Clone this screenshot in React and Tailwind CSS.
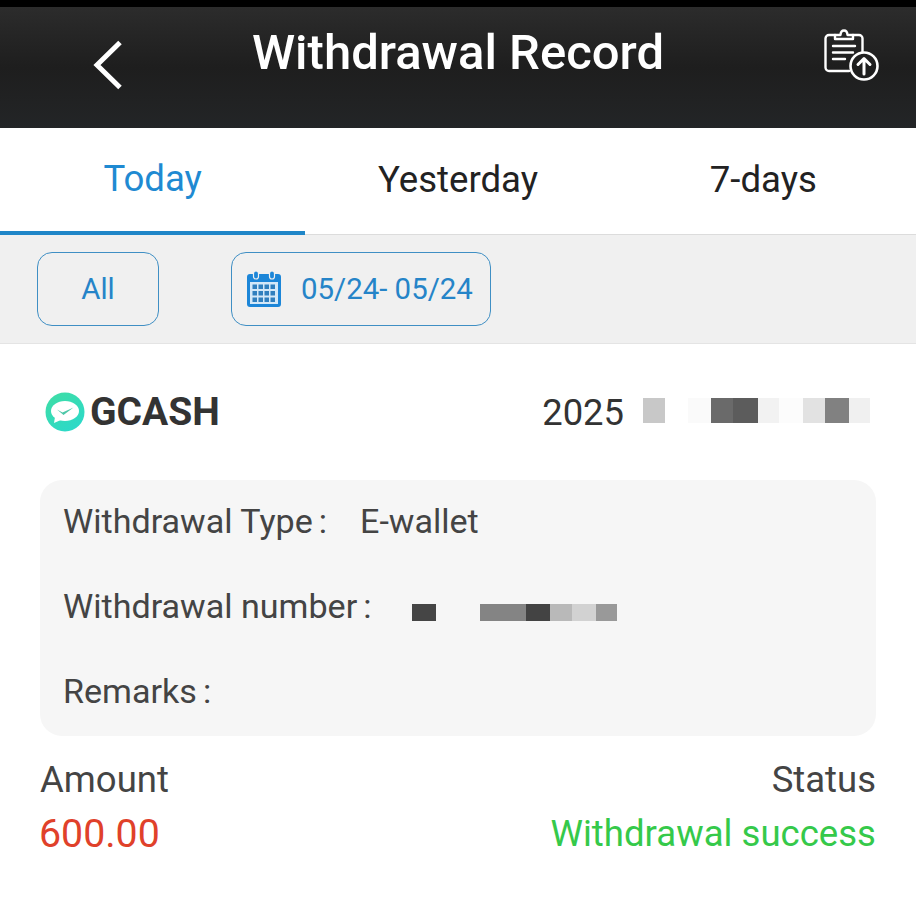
import React from "react";

const BackIcon = () => (
  <svg width="32" height="50" viewBox="0 0 32 50" fill="none" stroke="#fff" strokeWidth="5">
    <path d="M28 2.5 L5 25 L28 47.5" />
  </svg>
);

const ExportIcon = () => (
  <svg width="56" height="54" viewBox="0 0 56 54" fill="none" stroke="#fff" strokeWidth="2.4" strokeLinecap="round" strokeLinejoin="round">
    <path d="M12 7H6a3.5 3.5 0 0 0-3.5 3.5v29A3.5 3.5 0 0 0 6 43h20" />
    <path d="M30 7h6a3.5 3.5 0 0 1 3.5 3.5V24" />
    <path d="M12 11V7h5.5c.3-6 6.7-6 7 0H30v4z" />
    <path d="M10 18h22M10 24.5h20M10 31h12" />
    <circle cx="41" cy="38" r="13.5" strokeWidth="2.6" />
    <path d="M41 46V31M35 36.5l6-6 6 6" strokeWidth="3" />
  </svg>
);

const CalendarIcon = () => (
  <svg width="34" height="37" viewBox="0 0 34 37">
    <path d="M3 4h28a3 3 0 0 1 3 3v27a3 3 0 0 1-3 3H3a3 3 0 0 1-3-3V7a3 3 0 0 1 3-3z" fill="#1c86d8" />
    <rect x="3" y="12" width="28" height="22" fill="#d3e8f8" />
    <rect x="6.5" y="1" width="5" height="8" rx="2.5" fill="#1c86d8" stroke="#f0f0f0" strokeWidth="1.2" />
    <rect x="22.5" y="1" width="5" height="8" rx="2.5" fill="#1c86d8" stroke="#f0f0f0" strokeWidth="1.2" />
    <g fill="#2f7fbe">
      {[14.5, 21, 27.5].map((y) =>
        [5.5, 11.5, 17.5, 23.5].map((x) => <rect key={`${x}-${y}`} x={x} y={y} width="4.5" height="4.5" />)
      )}
    </g>
  </svg>
);

const GcashLogo = () => (
  <svg width="40" height="40" viewBox="0 0 40 40">
    <defs>
      <linearGradient id="gcashFill" x1="0.2" y1="0" x2="0.8" y2="1">
        <stop offset="0" stopColor="#3edda6" />
        <stop offset="1" stopColor="#2bd9cb" />
      </linearGradient>
    </defs>
    <circle cx="20" cy="20" r="19.5" fill="url(#gcashFill)" />
    <ellipse cx="20" cy="19" rx="14" ry="10" fill="#fff" />
    <path d="M10 25l-1 6 8-3.5z" fill="#fff" />
    <path d="M12 17.5l5.5 3 11-5-10 7.5z" fill="#4cc7a8" />
  </svg>
);

// Redacted values are shown as rows of mosaic blocks
const Mosaic = ({ blocks, height }) => (
  <div className="flex items-stretch" style={{ height }}>
    {blocks.map(([width, color], i) => (
      <div key={i} style={{ width, backgroundColor: color }} />
    ))}
  </div>
);

const dateBlocks = [
  [22, "#c8c8c8"], [23, "#ffffff"], [23, "#fafafa"], [22, "#6a6a6a"], [25, "#5c5c5c"], [21, "#f2f2f2"],
  [24, "#fcfcfc"], [22, "#e2e2e2"], [24, "#818181"], [21, "#f0f0f0"],
];

const numberBlocks = [
  [24, "#454545"], [44, "#f6f6f6"], [46, "#848484"], [24, "#434343"], [22, "#b9b9b9"], [24, "#d2d2d2"], [21, "#999999"],
];

const Field = ({ label, children }) => (
  <div className="flex items-center h-[42px] text-[34.1px] leading-none text-[#444]">
    <span>{label}</span>
    <span className="ml-[6px]">:</span>
    {children}
  </div>
);

export default function App() {
  return (
    <div className="w-[916px] h-[905px] bg-white overflow-hidden" style={{ fontFamily: "Roboto, 'Liberation Sans', sans-serif" }}>
      <div className="h-[7px] bg-black" />
      <header className="h-[121px] bg-gradient-to-b from-[#2c2c2c] via-[#1e1e1e] to-[#232527] grid grid-cols-[1fr_auto_1fr] items-start pl-[92px] pr-[37px]">
        <div className="mt-[33px]"><BackIcon /></div>
        <h1 className="mt-[17px] text-[49px] leading-[58px] font-medium text-white -ml-[55px]">Withdrawal Record</h1>
        <div className="mt-[21px] justify-self-end"><ExportIcon /></div>
      </header>

      <nav className="h-[107px] grid grid-cols-3 text-[36.6px] border-b border-[#dcdcdc]">
        <div className="h-[107px] flex items-center justify-center text-[#1f8ad2] border-b-[4px] border-[#1f86c8]">Today</div>
        <div className="flex items-center justify-center text-[#222] pb-[3px]">Yesterday</div>
        <div className="flex items-center justify-center text-[#222] pb-[3px]">7-days</div>
      </nav>

      <div className="h-[109px] bg-[#f0f0f0] border-b border-[#e4e4e4] flex items-center pl-[37px] pb-[1px] gap-[72px] text-[29.4px] text-[#2584c8]">
        <div className="w-[122px] h-[74px] rounded-[15px] border-[1.5px] border-[#3f8fc4] flex items-center justify-center pt-[2px]">All</div>
        <div className="w-[260px] h-[74px] rounded-[15px] border-[1.5px] border-[#3f8fc4] flex items-center pl-[15px] gap-[20px]">
          <CalendarIcon />
          <span className="pt-[2px]">05/24- 05/24</span>
        </div>
      </div>

      <section className="px-[40px]">
        <div className="h-[136px] flex items-center justify-between pr-[6px] pb-[1px]">
          <div className="flex items-center gap-[5px] pl-[5px]">
            <GcashLogo />
            <span className="text-[39px] font-bold text-[#333] pt-[2px]">GCASH</span>
          </div>
          <div className="flex items-center gap-[19px] text-[36.4px] text-[#333]">
            <span className="pt-[3px]">2025</span>
            <div className="-mt-[1px]"><Mosaic blocks={dateBlocks} height={25} /></div>
          </div>
        </div>

        <div className="h-[256px] rounded-[22px] bg-[#f6f6f6] pl-[23px] pt-[20px] flex flex-col gap-[43px]">
          <Field label="Withdrawal Type">
            <span className="ml-[33px]">E-wallet</span>
          </Field>
          <Field label="Withdrawal number">
            <div className="ml-[41px] mt-[12px]"><Mosaic blocks={numberBlocks} height={17} /></div>
          </Field>
          <Field label="Remarks" />
        </div>

        <div className="flex justify-between mt-[24px] text-[36.5px] leading-[40px] text-[#444]">
          <span>Amount</span>
          <span>Status</span>
        </div>
        <div className="flex justify-between items-center mt-[13px] leading-[42px]">
          <span className="text-[#e0412a] text-[39.3px] -ml-[1px]">600.00</span>
          <span className="text-[#35c94a] text-[36.6px]">Withdrawal success</span>
        </div>
      </section>
    </div>
  );
}
